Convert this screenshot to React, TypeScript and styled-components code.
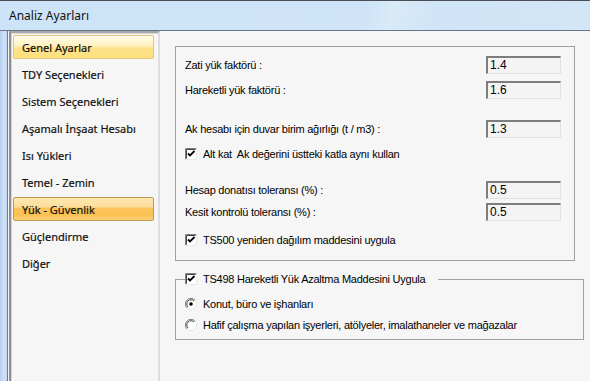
import styled, { createGlobalStyle } from "styled-components";

const GlobalStyle = createGlobalStyle`
  html, body {
    margin: 0;
    padding: 0;
    background: #f6f6f6;
  }
`;

const Window = styled.div`
  display: flex;
  flex-direction: column;
  width: 590px;
  height: 381px;
  overflow: hidden;
  background: #f6f6f6;
`;

const TitleBar = styled.div`
  display: flex;
  align-items: center;
  height: 29px;
  padding-left: 9px;
  border-top: 1px solid #4a4f57;
  border-bottom: 1px solid #67768a;
  background: linear-gradient(100deg, #cde3f8 0%, #cfe4f8 62%, #d9eaf8 66%, #cfe4f6 75%, #d3e6f6 100%);
  font-family: "Noto Sans", "Open Sans", sans-serif;
  font-size: 12px;
  color: #111;
`;

const Frame = styled.div`
  display: flex;
  flex: 1;
  min-height: 0;
`;

const FrameEdge = styled.div`
  width: 7px;
  background: linear-gradient(90deg, #b6cff0 0%, #cfe1f7 60%, #bed5f1 100%);
  border-right: 1px solid #6f7b8c;
`;

const Client = styled.div`
  display: flex;
  flex: 1;
  background: #f6f6f6;
`;

const Nav = styled.div`
  display: flex;
  flex-direction: column;
  gap: 3px;
  width: 145px;
  margin-left: 1px;
  padding: 2px 0 0 2px;
  border-left: 2px solid #8e8e8e;
  border-top: 2px solid #a6a6a6;
  border-right: 2px solid #dedede;
  box-shadow: inset 1px 1px 0 #d6d6d6;
`;

const NavItem = styled.div<{ state?: "active" | "hover" }>`
  display: flex;
  align-items: center;
  height: 22px;
  width: 131px;
  padding-left: 8px;
  border: 1px solid transparent;
  border-radius: 2px;
  font-family: "Noto Sans", "Open Sans", sans-serif;
  font-size: 11px;
  font-weight: 400;
  color: #111;
  -webkit-text-stroke: 0.2px #111;
  ${({ state }) =>
    state === "active"
      ? `
    border-color: #c39b4e;
    background: linear-gradient(180deg, #fee7b2 0%, #fddd9b 40%, #fbc55a 48%, #fbc04f 75%, #fdd07a 100%);
  `
      : state === "hover"
      ? `
    border-color: #e3c67c;
    background: linear-gradient(180deg, #fffbea 0%, #fff1bf 45%, #fde28a 55%, #fde07e 100%);
  `
      : ""}
`;

const Content = styled.div`
  display: flex;
  flex-direction: column;
  padding: 15px 0 0 15px;
`;

const Group = styled.div`
  display: flex;
  flex-direction: column;
  width: 398px;
  height: 205px;
  padding-top: 8px;
  border: 1px solid #a0a0a0;
  box-sizing: content-box;
`;

const FieldSet = styled.fieldset`
  display: flex;
  flex-direction: column;
  width: 398px;
  height: 62px;
  margin: 11px 0 0 0;
  padding: 4px 0 0 9px;
  border: 1px solid #a0a0a0;
  box-sizing: content-box;
  min-width: 0;
`;

const Legend = styled.legend`
  display: flex;
  align-items: center;
  padding: 0 13px 0 0;
  margin-left: 0;
  height: 14px;
`;

const Row = styled.div<{ top: number }>`
  display: flex;
  align-items: center;
  justify-content: space-between;
  height: 19px;
  margin-top: ${({ top }) => top}px;
  padding: 0 13px 0 9px;
`;

const CheckRow = styled.div<{ top: number }>`
  display: flex;
  align-items: center;
  height: 19px;
  margin-top: ${({ top }) => top}px;
  padding-left: 9px;
`;

const RadioRow = styled.div<{ top: number }>`
  display: flex;
  align-items: center;
  height: 19px;
  margin-top: ${({ top }) => top}px;
`;

const Label = styled.span`
  font-family: "Liberation Sans", Arial, sans-serif;
  font-size: 11px;
  letter-spacing: -0.25px;
  color: #000;
  white-space: nowrap;
`;

const BoxLabel = styled(Label)`
  margin-left: 6px;
`;

const Input = styled.div`
  display: flex;
  align-items: center;
  width: 70px;
  height: 15px;
  padding-left: 2px;
  border-top: 2px solid #7d7d7d;
  border-left: 2px solid #7d7d7d;
  border-right: 1px solid #e2e2e2;
  border-bottom: 1px solid #e2e2e2;
  background: #f4f4f4;
  font-family: "Liberation Sans", Arial, sans-serif;
  font-size: 12px;
  color: #000;
`;

function CheckBox() {
  return (
    <svg width="12" height="12" viewBox="0 0 12 12">
      <rect x="0" y="0" width="12" height="12" fill="#ffffff" />
      <path d="M0.5 11.5V0.5H11.5" stroke="#808080" fill="none" />
      <path d="M1.5 10.5V1.5H10.5" stroke="#404040" fill="none" />
      <path d="M0.5 11.5H11.5V0.5" stroke="#e8e8e8" fill="none" />
      <path d="M3 5.5L5 7.5L9.5 3" stroke="#000" strokeWidth="1.8" fill="none" />
    </svg>
  );
}

function Radio({ checked }: { checked?: boolean }) {
  return (
    <svg width="12" height="12" viewBox="0 0 12 12">
      <circle cx="6" cy="6" r="5.5" fill="#ffffff" />
      <path d="M10 2A5.5 5.5 0 0 0 2 10" stroke="#808080" fill="none" />
      <path d="M9 3A4.2 4.2 0 0 0 3 9" stroke="#404040" fill="none" />
      <path d="M2 10A5.5 5.5 0 0 0 10 2" stroke="#e6e6e6" fill="none" />
      {checked && <circle cx="6" cy="6" r="1.8" fill="#000" />}
    </svg>
  );
}

const navItems: { name: string; state?: "active" | "hover" }[] = [
  { name: "Genel Ayarlar", state: "hover" },
  { name: "TDY Seçenekleri" },
  { name: "Sistem Seçenekleri" },
  { name: "Aşamalı İnşaat Hesabı" },
  { name: "Isı Yükleri" },
  { name: "Temel - Zemin" },
  { name: "Yük - Güvenlik", state: "active" },
  { name: "Güçlendirme" },
  { name: "Diğer" },
];

export default function App() {
  return (
    <>
      <GlobalStyle />
      <Window>
        <TitleBar>Analiz Ayarları</TitleBar>
        <Frame>
          <FrameEdge />
          <Client>
            <Nav>
              {navItems.map((item) => (
                <NavItem key={item.name} state={item.state}>
                  {item.name}
                </NavItem>
              ))}
            </Nav>
            <Content>
              <Group>
                <Row top={0}>
                  <Label>Zati yük faktörü :</Label>
                  <Input>1.4</Input>
                </Row>
                <Row top={6}>
                  <Label>Hareketli yük faktörü :</Label>
                  <Input>1.6</Input>
                </Row>
                <Row top={20}>
                  <Label>Ak hesabı için duvar birim ağırlığı (t / m3) :</Label>
                  <Input>1.3</Input>
                </Row>
                <CheckRow top={6}>
                  <CheckBox />
                  <BoxLabel>Alt kat&nbsp; Ak değerini üstteki katla aynı kullan</BoxLabel>
                </CheckRow>
                <Row top={17}>
                  <Label>Hesap donatısı toleransı (%) :</Label>
                  <Input>0.5</Input>
                </Row>
                <Row top={3}>
                  <Label>Kesit kontrolü toleransı (%) :</Label>
                  <Input>0.5</Input>
                </Row>
                <CheckRow top={9}>
                  <CheckBox />
                  <BoxLabel>TS500 yeniden dağılım maddesini uygula</BoxLabel>
                </CheckRow>
              </Group>
              <FieldSet>
                <Legend>
                  <CheckBox />
                  <BoxLabel>TS498 Hareketli Yük Azaltma Maddesini Uygula</BoxLabel>
                </Legend>
                <RadioRow top={4}>
                  <Radio checked />
                  <BoxLabel>Konut, büro ve işhanları</BoxLabel>
                </RadioRow>
                <RadioRow top={2}>
                  <Radio />
                  <BoxLabel>Hafif çalışma yapılan işyerleri, atölyeler, imalathaneler ve mağazalar</BoxLabel>
                </RadioRow>
              </FieldSet>
            </Content>
          </Client>
        </Frame>
      </Window>
    </>
  );
}
